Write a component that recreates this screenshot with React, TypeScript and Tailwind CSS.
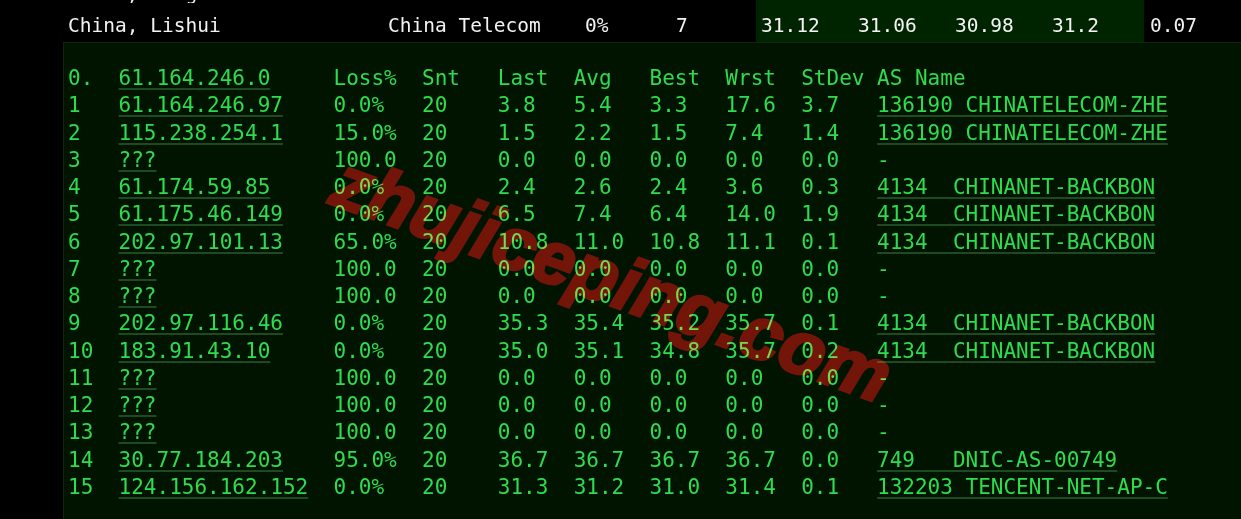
const hops = [
  { hop: "1", host: "61.164.246.97", loss: "0.0%", last: "3.8", avg: "5.4", best: "3.3", wrst: "17.6", stdev: "3.7", as: "136190 CHINATELECOM-ZHE" },
  { hop: "2", host: "115.238.254.1", loss: "15.0%", last: "1.5", avg: "2.2", best: "1.5", wrst: "7.4", stdev: "1.4", as: "136190 CHINATELECOM-ZHE" },
  { hop: "3", host: "???", loss: "100.0", last: "0.0", avg: "0.0", best: "0.0", wrst: "0.0", stdev: "0.0", as: "-" },
  { hop: "4", host: "61.174.59.85", loss: "0.0%", last: "2.4", avg: "2.6", best: "2.4", wrst: "3.6", stdev: "0.3", as: "4134  CHINANET-BACKBON" },
  { hop: "5", host: "61.175.46.149", loss: "0.0%", last: "6.5", avg: "7.4", best: "6.4", wrst: "14.0", stdev: "1.9", as: "4134  CHINANET-BACKBON" },
  { hop: "6", host: "202.97.101.13", loss: "65.0%", last: "10.8", avg: "11.0", best: "10.8", wrst: "11.1", stdev: "0.1", as: "4134  CHINANET-BACKBON" },
  { hop: "7", host: "???", loss: "100.0", last: "0.0", avg: "0.0", best: "0.0", wrst: "0.0", stdev: "0.0", as: "-" },
  { hop: "8", host: "???", loss: "100.0", last: "0.0", avg: "0.0", best: "0.0", wrst: "0.0", stdev: "0.0", as: "-" },
  { hop: "9", host: "202.97.116.46", loss: "0.0%", last: "35.3", avg: "35.4", best: "35.2", wrst: "35.7", stdev: "0.1", as: "4134  CHINANET-BACKBON" },
  { hop: "10", host: "183.91.43.10", loss: "0.0%", last: "35.0", avg: "35.1", best: "34.8", wrst: "35.7", stdev: "0.2", as: "4134  CHINANET-BACKBON" },
  { hop: "11", host: "???", loss: "100.0", last: "0.0", avg: "0.0", best: "0.0", wrst: "0.0", stdev: "0.0", as: "-" },
  { hop: "12", host: "???", loss: "100.0", last: "0.0", avg: "0.0", best: "0.0", wrst: "0.0", stdev: "0.0", as: "-" },
  { hop: "13", host: "???", loss: "100.0", last: "0.0", avg: "0.0", best: "0.0", wrst: "0.0", stdev: "0.0", as: "-" },
  { hop: "14", host: "30.77.184.203", loss: "95.0%", last: "36.7", avg: "36.7", best: "36.7", wrst: "36.7", stdev: "0.0", as: "749   DNIC-AS-00749" },
  { hop: "15", host: "124.156.162.152", loss: "0.0%", last: "31.3", avg: "31.2", best: "31.0", wrst: "31.4", stdev: "0.1", as: "132203 TENCENT-NET-AP-C" },
];

const link = "underline decoration-[#1d4a21] decoration-2 underline-offset-[3px]";

type Hop = (typeof hops)[number];

function HopRow({ h, header }: { h: Hop; header?: boolean }) {
  return (
    <div className="flex whitespace-pre">
      <span className="w-[4ch] shrink-0">{h.hop}</span>
      <span className="w-[17ch] shrink-0">
        <span className={link}>{h.host}</span>
      </span>
      <span className="w-[7ch] shrink-0">{h.loss}</span>
      <span className="w-[6ch] shrink-0">{header ? "Snt" : "20"}</span>
      <span className="w-[6ch] shrink-0">{h.last}</span>
      <span className="w-[6ch] shrink-0">{h.avg}</span>
      <span className="w-[6ch] shrink-0">{h.best}</span>
      <span className="w-[6ch] shrink-0">{h.wrst}</span>
      <span className="w-[6ch] shrink-0">{h.stdev}</span>
      <span className="shrink-0">
        {h.as === "-" || header ? h.as : <span className={link}>{h.as}</span>}
      </span>
    </div>
  );
}

// one row of the summary table above the mtr panel
function SummaryCells({ cells }: { cells: string[] }) {
  return (
    <>
      <div className="w-[63px] shrink-0" />
      <div className="w-[320px] shrink-0 pl-[5px]">{cells[0]}</div>
      <div className="w-[197px] shrink-0 pl-[5px]">{cells[1]}</div>
      <div className="w-[91px] shrink-0 pl-[5px]">{cells[2]}</div>
      <div className="w-[85px] shrink-0 pl-[5px]">{cells[3]}</div>
      <div className="w-[97px] shrink-0 bg-[#002400] pl-[5px]">{cells[4]}</div>
      <div className="w-[97px] shrink-0 bg-[#002400] pl-[5px]">{cells[5]}</div>
      <div className="w-[97px] shrink-0 bg-[#002400] pl-[5px]">{cells[6]}</div>
      <div className="w-[97px] shrink-0 bg-[#002400] pl-[5px]">{cells[7]}</div>
      <div className="flex-1 pl-[6px]">{cells[8]}</div>
    </>
  );
}

export default function App() {
  return (
    <div className="relative flex h-[519px] w-[1241px] flex-col overflow-hidden bg-black font-['DejaVu_Sans_Mono',monospace]">
      {/* summary table, previous row cut off at the top */}
      <div className="text-[19.5px] text-[#f2f2f2]">
        <div className="flex h-[3px] overflow-hidden leading-[20px]">
          <div className="flex w-full -mt-[16px] whitespace-pre">
            <SummaryCells
              cells={["China, Hangzhou", "China Telecom", "0%", "7", "30.85", "30.91", "30.77", "31.1", "0.09"]}
            />
          </div>
        </div>
        <div className="flex h-[39px] whitespace-pre leading-[26px]">
          <div className="flex w-full items-start [&>div]:h-full [&>div]:pt-[10px]">
            <SummaryCells
              cells={["China, Lishui", "China Telecom", "0%", "7", "31.12", "31.06", "30.98", "31.2", "0.07"]}
            />
          </div>
        </div>
      </div>

      {/* mtr output */}
      <div className="ml-[63px] flex-1 border-l border-t border-[#0b280b] bg-[#001400] pl-[4px] pt-[22px] text-[21px] leading-[27.25px] text-[#2fdc4e]">
        <HopRow
          header
          h={{ hop: "0.", host: "61.164.246.0", loss: "Loss%", last: "Last", avg: "Avg", best: "Best", wrst: "Wrst", stdev: "StDev", as: "AS Name" }}
        />
        {hops.map((h) => (
          <HopRow key={h.hop} h={h} />
        ))}
      </div>

      {/* watermark */}
      <div className="pointer-events-none absolute left-[612px] top-[279px] -translate-x-1/2 -translate-y-1/2 rotate-[20deg] whitespace-nowrap font-['Liberation_Sans',Arial,sans-serif] text-[75px] font-bold italic leading-none text-[#74150a] mix-blend-lighten [-webkit-text-stroke:3px_#74150a]">
        zhujiceping.com
      </div>
    </div>
  );
}
